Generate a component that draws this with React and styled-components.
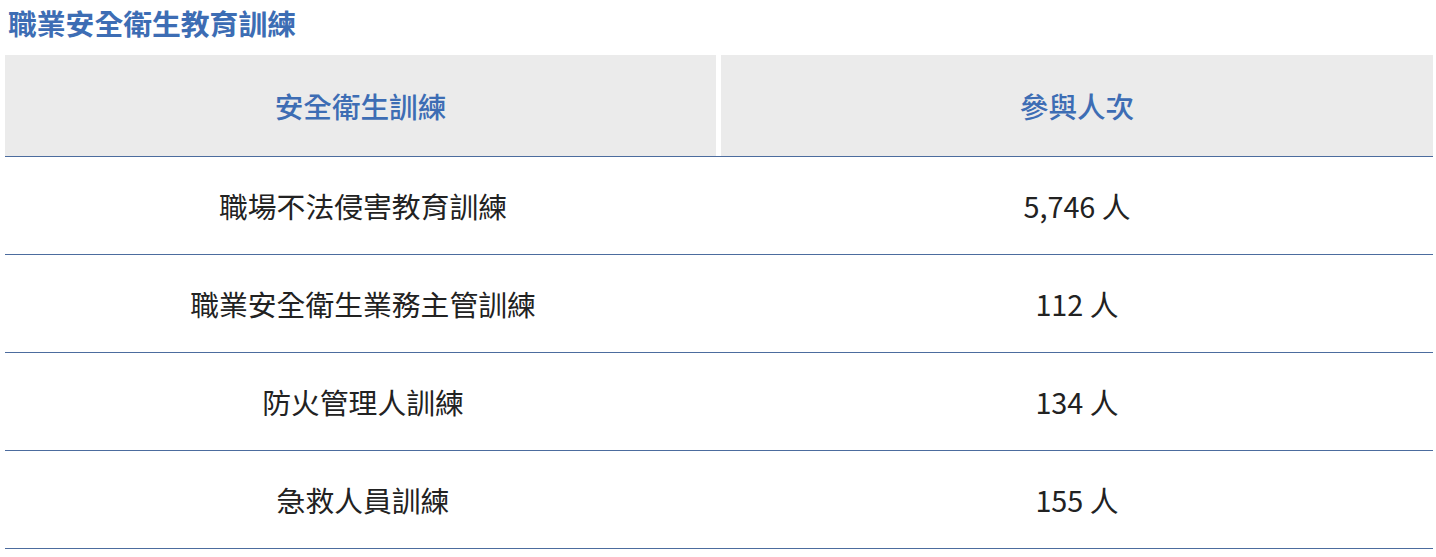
import styled, { createGlobalStyle } from 'styled-components';

const GlobalStyle = createGlobalStyle`
  body {
    margin: 0;
    background: #fff;
    font-family: "Noto Sans CJK TC", "Noto Sans", sans-serif;
  }
`;

const Page = styled.div`
  padding: 3px 3px 0 5px;
`;

const Title = styled.h2`
  margin: 0 0 12px 3px;
  font-size: 28.8px;
  line-height: 40px;
  font-weight: 700;
  color: #3d6db4;
`;

const Table = styled.div`
  display: flex;
  flex-direction: column;
  width: 1428px;
`;

const HeadRow = styled.div`
  display: grid;
  grid-template-columns: 711px 1fr;
  column-gap: 5px;
  height: 101px;
  border-bottom: 1px solid #4c6c9e;
`;

const HeadCell = styled.div`
  background: #ebebeb;
  display: flex;
  align-items: center;
  justify-content: center;
  font-size: 28.6px;
  font-weight: 500;
  color: #3d6db4;
`;

const Row = styled.div`
  display: grid;
  grid-template-columns: 716px 1fr;
  height: 97px;
  border-bottom: 1px solid #4c6c9e;
`;

const Cell = styled.div`
  display: flex;
  align-items: center;
  justify-content: center;
  font-size: 28.8px;
  color: #222;
`;

const rows = [
  ['職場不法侵害教育訓練', '5,746 人'],
  ['職業安全衛生業務主管訓練', '112 人'],
  ['防火管理人訓練', '134 人'],
  ['急救人員訓練', '155 人'],
];

export default function App() {
  return (
    <Page>
      <GlobalStyle />
      <Title>職業安全衛生教育訓練</Title>
      <Table>
        <HeadRow>
          <HeadCell>安全衛生訓練</HeadCell>
          <HeadCell>參與人次</HeadCell>
        </HeadRow>
        {rows.map(([name, count]) => (
          <Row key={name}>
            <Cell>{name}</Cell>
            <Cell>{count}</Cell>
          </Row>
        ))}
      </Table>
    </Page>
  );
}
